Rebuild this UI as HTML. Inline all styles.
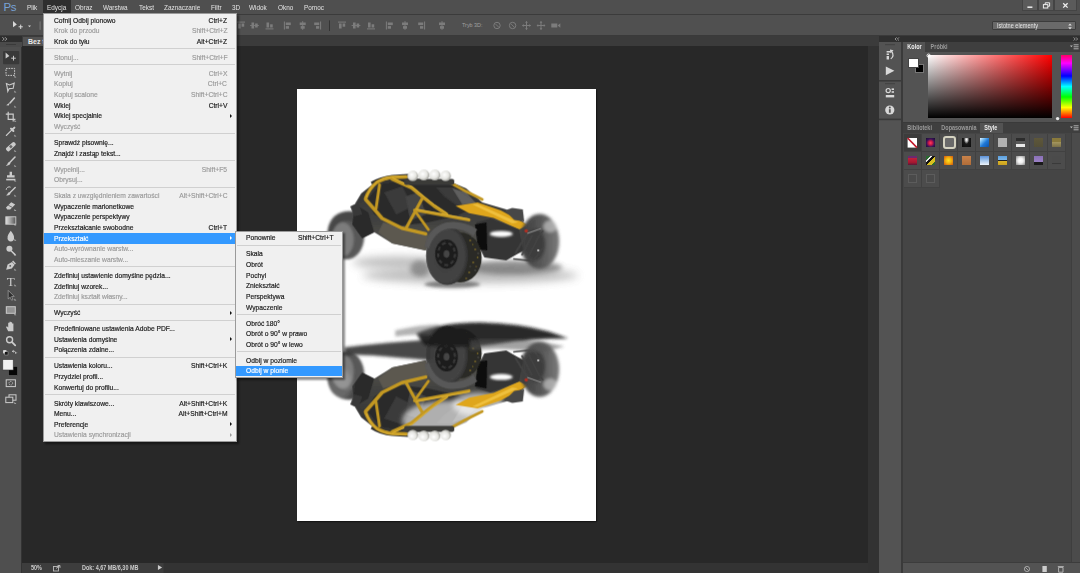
<!DOCTYPE html>
<html lang="pl"><head><meta charset="utf-8"><title>Photoshop</title>
<style>
*{box-sizing:border-box;margin:0;padding:0}
html,body{width:1080px;height:573px;overflow:hidden;background:#282828}
body{position:relative;font-family:"Liberation Sans",sans-serif;font-size:8px;color:#ddd;line-height:1}
.abs{position:absolute}
#menubar{position:absolute;left:0;top:0;width:1080px;height:13.5px;background:#4f4f4f}
#pslogo{position:absolute;left:3.5px;top:1.5px;font-size:11.5px;color:#78a3d6;letter-spacing:-0.3px}
.mbi{position:absolute;top:4.3px;font-size:8px;color:#e4e4e4;white-space:nowrap;transform:scaleX(.8);transform-origin:0 0}
#mbhl{position:absolute;left:42.5px;top:0;width:28.5px;height:13.5px;background:#2f2f2f}
#optbar{position:absolute;left:0;top:13.5px;width:1080px;height:22px;background:#505050;border-top:1px solid #3b3b3b;border-bottom:1px solid #3a3a3a}
#tabstrip{position:absolute;left:0;top:35.5px;width:880px;height:10.5px;background:#3b3b3b}
#doctab{position:absolute;left:23px;top:36.5px;width:60px;height:9.5px;background:#535353;font-size:7px;color:#e8e8e8;padding:1.5px 0 0 5px;font-weight:bold}
#tools{position:absolute;left:0;top:36px;width:21.5px;height:537px;background:#4f4f4f;border-right:1px solid #333}
#toolhdr{position:absolute;left:0;top:36px;width:21.5px;height:6px;background:#2e2e2e}
#canvasbg{position:absolute;left:22px;top:46px;width:858px;height:527px;background:#282828}
#doc{position:absolute;left:296.8px;top:88.6px;width:299.3px;height:432.4px;background:#fff;overflow:hidden;box-shadow:.8px .8px 1.2px rgba(0,0,0,.55)}
#vscroll{position:absolute;left:867.5px;top:46px;width:12px;height:527px;background:#323232}
#statusbar{position:absolute;left:22px;top:562.5px;width:846px;height:10.5px;background:linear-gradient(to right,#3d3d3d 0,#3d3d3d 141px,#333 142px)}
#statusbar span{position:absolute;top:2px;font-size:6.5px;color:#ccc;font-weight:bold;transform:scaleX(.84);transform-origin:0 0;white-space:nowrap}

/* menus */
.menu{position:absolute;background:#f0f0f0;border:1px solid #9a9a9a;box-shadow:1.5px 1.5px 2px rgba(0,0,0,.45);color:#1a1a1a;font-size:8px}
.menu.main{left:43px;top:13.2px;width:194.2px;padding-top:.6px;padding-bottom:.7px}
.menu.sub{left:235.3px;top:230.9px;width:108px;padding-top:.8px;padding-bottom:.7px}
.mi{position:relative;height:10.65px;white-space:nowrap}
.mi .lab{position:absolute;left:9.6px;top:1.8px;transform:scaleX(.838);transform-origin:0 0;-webkit-text-stroke:.2px}
.menu.sub .mi .lab{left:9.8px}
.mi .sc{position:absolute;right:9px;top:1.8px;transform:scaleX(.838);transform-origin:100% 0;-webkit-text-stroke:.2px}
.mi .arr{position:absolute;right:4px;top:3.2px;width:0;height:0;border-left:2.6px solid #111;border-top:2.4px solid transparent;border-bottom:2.4px solid transparent}
.mi.dis{color:#9b9b9b}
.mi.dis .arr{border-left-color:#9b9b9b}
.mi.hl{background:#3399ff;color:#fff}
.mi.hl .arr{border-left-color:#fff}
.sep{height:5.325px;position:relative}
.sep i{position:absolute;left:1px;right:1px;top:1.6px;height:1px;background:#d0d0d0;display:block}

/* right panels */
#rdock{position:absolute;left:879.2px;top:35.5px;width:200.8px;height:537.5px;background:#3a3a3a}
#rtop{position:absolute;left:879.2px;top:35.5px;width:200.8px;height:6px;background:#2f2f2f}
#iconstrip{position:absolute;left:879.4px;top:42px;width:21.8px;height:531px;background:#535353}
#panelA{position:absolute;left:903px;top:42px;width:177px;height:79.5px;background:#535353}
#panelB{position:absolute;left:903px;top:123px;width:177px;height:450px;background:#454545}
.ptabs{position:absolute;left:0;top:0;right:0;height:9.5px;background:#3f3f3f}
.ptab{position:absolute;top:0;height:9.5px;font-size:6.5px;font-weight:bold;color:#9a9a9a;padding:1.8px 0 0 0;text-align:center}
.ptab span{display:inline-block;transform:scaleX(.84)}
.ptab.on{background:#535353;color:#f0f0f0}
#toolsvg{position:absolute;left:0;top:36px;filter:blur(.25px);opacity:.92}
#winbtns{position:absolute;left:1022px;top:0;width:58px;height:10.5px}
.wb{position:absolute;top:0;height:10.5px;background:#5b5b5b;border:1px solid #444;border-top:none}
#workspace{position:absolute;left:991.5px;top:20.5px;width:84px;height:9.5px;background:#6a6a6a;border:1px solid #3c3c3c;border-radius:1px;color:#e6e6e6;font-size:7px;padding:.6px 0 0 4px}
#workspace span{display:inline-block;transform:scaleX(.8);transform-origin:0 0}
#colfield{position:absolute;left:25px;top:13px;width:123.5px;height:63px;background:linear-gradient(to bottom,rgba(0,0,0,0),#000),linear-gradient(to right,#fff,#f00)}
#huestrip{position:absolute;left:158px;top:13px;width:11px;height:63px;background:linear-gradient(to bottom,#f06 0%,#f0f 13%,#00f 33.3%,#0ff 50%,#0f0 66.6%,#ff0 83.3%,#f00 100%)}
.cell{position:absolute;width:18px;height:18px;background:#4c4c4c;border-right:1px solid #414141;border-bottom:1px solid #414141}
.cell i{position:absolute;left:3.7px;top:4.2px;width:9.2px;height:9.2px;display:block}
#pBscroll{position:absolute;right:0;top:9.5px;width:9px;bottom:11px;background:#4b4b4b;border-left:1px solid #3e3e3e}
#pBfoot{position:absolute;left:0;right:0;bottom:0;height:11px;background:#535353;border-top:1px solid #3c3c3c}
.isg{position:absolute;left:1.5px;width:19px;background:#535353}

</style></head>
<body>
<div id="canvasbg"></div>
<div id="doc">
<svg style="position:absolute;left:0;top:0" width="299" height="432" viewBox="296.8 88.6 299 432">
<defs>
 <filter id="b0" x="-10%" y="-10%" width="120%" height="120%"><feGaussianBlur stdDeviation="0.45"/></filter>
 <filter id="b1" x="-20%" y="-20%" width="140%" height="140%"><feGaussianBlur stdDeviation="0.8"/></filter>
 <filter id="b2" x="-20%" y="-40%" width="140%" height="180%"><feGaussianBlur stdDeviation="1.8"/></filter>
 <filter id="b3" x="-20%" y="-60%" width="140%" height="220%"><feGaussianBlur stdDeviation="2.8"/></filter>
 <filter id="b4" x="-20%" y="-80%" width="140%" height="260%"><feGaussianBlur stdDeviation="4.5"/></filter>
 <radialGradient id="lamp" cx=".4" cy=".4" r=".7"><stop offset="0" stop-color="#fff"/><stop offset=".55" stop-color="#e6e6e2"/><stop offset="1" stop-color="#8e8e88"/></radialGradient>
 <radialGradient id="tire" cx=".45" cy=".5" r=".55"><stop offset="0" stop-color="#3e3e3e"/><stop offset=".8" stop-color="#444"/><stop offset="1" stop-color="#2e2e2e"/></radialGradient>
 <linearGradient id="bodyg" x1="0" y1="0" x2="0" y2="1"><stop offset="0" stop-color="#303030"/><stop offset=".55" stop-color="#424240"/><stop offset="1" stop-color="#5e5c56"/></linearGradient>
 <linearGradient id="rw" x1="0" y1="0" x2="1" y2="0"><stop offset="0" stop-color="#3a3a3a"/><stop offset=".6" stop-color="#5c5c5c"/><stop offset="1" stop-color="#7a7a7a"/></linearGradient>
 <linearGradient id="fade" x1="0" y1="0" x2="0" y2="1"><stop offset="0" stop-color="#fff" stop-opacity="0"/><stop offset=".5" stop-color="#fff" stop-opacity=".55"/><stop offset="1" stop-color="#fff" stop-opacity=".85"/></linearGradient>
 <!-- part A: wheels far + body -->
 <g id="carA">
  <g filter="url(#b1)">
   <ellipse cx="346.5" cy="236" rx="17.5" ry="23" fill="#585858"/>
   <ellipse cx="342.5" cy="239" rx="11" ry="17" fill="#7c7c7c"/>
   <path d="M327,234 Q328,214 345,211 Q358,210 365,216 L365,228 Q352,218 342,221 Q332,224 330,242z" fill="#474747"/>
  </g>
  <path d="M355,203 L361,193 L371,185 L381,180 L404,177 L452,182 L466,188 L482,202 L506,209 L524,222 L530,236 L524,250 L508,258 L486,257 L478,246 L470,236 L432,234 L426,250 L392,243 L368,228 L357,214z" fill="url(#bodyg)"/>
  <path d="M366,200 L380,184 L404,180 L452,185 L468,196 L478,206 L455,216 L428,222 L395,226 L374,214z" fill="#2c2c2c"/>
  <path d="M384,192 L402,186 L412,206 L396,214z" fill="#3b3b3b"/>
  <path d="M405,196 L418,192 L426,214 L410,220z" fill="#444"/>
  <path d="M436,187 L454,187 L470,198 L478,206 L458,206 L444,196z" fill="#3a3a3a"/>
  <path d="M452,188 L466,192 L476,203 L462,204z" fill="#6e6e6e" opacity=".7"/>
  <path d="M383,222 L428,234 L425,250 L392,243 L378,232z" fill="#5b5850"/>
  <path d="M355,204 L368,212 L374,232 L362,238 L352,224z" fill="#2a2a2a"/>
  <path d="M350,206 L358,202 L362,214 L354,216z" fill="#383838"/>
 </g>
 <!-- part B: cage, lights, front wheels, nose -->
 <g id="carB">
  <path d="M455.4,205.4 L477.4,202 L500.6,210 L527.5,224.4 L519,229 L493.3,217.4 L468.9,212.7z" fill="#dfa61c"/>
  <path d="M472,204 L477,203.4 L518,222 L512,223z" fill="#f4c84a" opacity=".75"/>
  
  <path d="M370.5,181.6 Q380,175.6 392,174.4 L408,173.6 L408,177 L392,177.6 Q381,178.6 372,184.6z" fill="#2e2e2e"/>
  <g fill="none" stroke="#c39822" stroke-width="3.5" stroke-linecap="round" stroke-linejoin="round">
   <path d="M365.4,198 Q369,188 376.5,182 Q384,177.6 392,177 L406,176.4"/>
   <path d="M365.4,199 L382,218 L401.7,227.8 L425.4,233.4"/>
   <path d="M379.3,184.5 L375.8,208.3" stroke-width="2.9"/>
   <path d="M392,178.6 L411.5,187.3 L422.6,196.6 L433.8,205.5 L446.4,213.9"/>
   <path d="M422.6,197.1 L405.9,227.8" stroke-width="3.1"/>
   <path d="M414.2,209.7 L428.2,229.2" stroke-width="2.8"/>
   <path d="M415.6,209.7 L468.7,219.5" stroke-width="3.3"/>
   <path d="M447.8,181 L464,190 L482,199" stroke-width="2.8"/>
  </g>
  <g fill="none" stroke="#e6ba3a" stroke-width="1" stroke-linecap="round" opacity=".8">
   <path d="M366,196.4 Q369.6,187 377,181 Q384,176.8 392,176.2 L406,175.6"/>
   <path d="M392.6,177.6 L412,186.4 L423,195.6 L434.4,204.6 L447,213"/>
   <path d="M416,208.8 L469,218.6"/>
  </g>
  <rect x="404" y="178.5" width="50" height="6" rx="2" fill="#3a3a38"/>
  <circle cx="412.6" cy="175.4" r="5.3" fill="url(#lamp)"/>
  <circle cx="423.6" cy="174.6" r="5.5" fill="url(#lamp)"/>
  <circle cx="434.6" cy="174.6" r="5.5" fill="url(#lamp)"/>
  <circle cx="445.4" cy="175.4" r="5.3" fill="url(#lamp)"/>
  <!-- far right wheel -->
  <g filter="url(#b2)">
   <ellipse cx="539.5" cy="241" rx="19.5" ry="27.5" fill="url(#rw)"/>
   <ellipse cx="535" cy="244" rx="10" ry="16" fill="#3e3e3e"/>
   <ellipse cx="550" cy="226" rx="7" ry="6" fill="#ddd" opacity=".55"/>
  </g>
  <path d="M504.5,210 L512,207.4 L522.6,209 L524,221 L514,219.6z" fill="#474747"/>
  <path d="M476,222 L490,218 L519,229 L523,250 L506,260 L484,257 L478,244z" fill="#363636"/>
  <path d="M474.7,224 L486.3,222 L487,250 L478,249z" fill="#0e0e0e"/>
  <ellipse cx="501" cy="233.4" rx="11.5" ry="3" fill="#fff" filter="url(#b1)"/>
  <g fill="none" stroke="#444" stroke-width="1.7">
   <path d="M515,253 L527,233 L541,228"/><path d="M521.5,255 L532,235"/><path d="M528,257 L538,237 L543,230"/><path d="M513,258.5 L533,260.5 L543,247"/>
  </g>
  <path d="M527,233 L541,228" stroke="#999" stroke-width="1" fill="none"/>
  <circle cx="526" cy="230.5" r="1.7" fill="#b33022"/>
  <circle cx="538" cy="250" r="1" fill="#eee"/>
  <!-- front left wheel -->
  <ellipse cx="460" cy="257" rx="21.5" ry="25" fill="#2a2a25"/>
  <g fill="#a88c2c"><circle cx="470" cy="240" r=".8"/><circle cx="475" cy="249" r=".8"/><circle cx="473" cy="262" r=".8"/><circle cx="469" cy="272" r=".8"/><circle cx="477.4" cy="257" r=".7"/><circle cx="466" cy="278" r=".7"/><circle cx="472.6" cy="244" r=".6"/><circle cx="476" cy="266" r=".6"/></g>
  <g fill="#555"><circle cx="472" cy="236" r=".8"/><circle cx="478" cy="253" r=".8"/><circle cx="475" cy="270" r=".8"/><circle cx="470" cy="266" r=".7"/></g>
  <ellipse cx="447" cy="255.2" rx="21.2" ry="29.4" fill="url(#tire)"/>
  <ellipse cx="446.3" cy="253.6" rx="11.4" ry="14.6" fill="#1d1d1d"/>
  <ellipse cx="446.3" cy="253.6" rx="8.4" ry="11" fill="none" stroke="#383838" stroke-width="2.2" stroke-dasharray="4,2.8"/>
  <ellipse cx="446.3" cy="253.6" rx="3" ry="3.8" fill="#444"/>
  <path d="M424.6,246 Q428,227 446,222 Q463,219.4 477,229 L473.4,235.6 Q462,227 447,228.6 Q434,231.6 428.6,248z" fill="#585858"/>
 </g>
</defs>
<g filter="url(#b0)">
<!-- top car shadow -->
<ellipse cx="470" cy="275" rx="108" ry="8" fill="#808080" opacity=".5" filter="url(#b4)"/>
<ellipse cx="398" cy="262" rx="46" ry="6" fill="#8a8a8a" opacity=".55" filter="url(#b4)"/>
<ellipse cx="512" cy="267" rx="50" ry="7" fill="#666" opacity=".7" filter="url(#b3)"/>
<ellipse cx="452" cy="284" rx="28" ry="3.4" fill="#3a3a3a" opacity=".6" filter="url(#b2)"/>
<ellipse cx="420" cy="268" rx="10" ry="8" fill="#555" opacity=".5" filter="url(#b3)"/>
<use href="#carA"/>
<use href="#carB"/>
<!-- bottom car (flipped around y=305) -->
<g transform="translate(0,610) scale(1,-1)">
 <use href="#carA"/>
</g>
<ellipse cx="448" cy="420" rx="46" ry="20" fill="#fff" opacity=".62" filter="url(#b3)"/>
<ellipse cx="478" cy="404" rx="26" ry="12" fill="#fff" opacity=".6" filter="url(#b3)"/>
<ellipse cx="340" cy="384" rx="12" ry="16" fill="#fff" opacity=".18" filter="url(#b3)"/>
<g transform="translate(0,610) scale(1,-1)">
 <use href="#carB"/>
</g>
<!-- bottom car dark streaks -->
<g filter="url(#b2)">
 <path d="M344,347 Q385,342 432,339 L432,360 Q395,357 372,355 Q355,354 345,355z" fill="#383838" opacity=".92"/>
 <path d="M416,333 Q440,322 480,322 Q520,323 548,331 Q560,335 568,338 Q530,338 500,343 Q460,349 424,345z" fill="#1e1e1e" opacity=".95"/>
 <path d="M470,340 Q520,336 564,346 L542,352 Q500,346 470,350z" fill="#555" opacity=".55"/>
 <path d="M395,330 Q420,324 440,324 L430,334 Q410,334 395,336z" fill="#666" opacity=".5"/>
</g>
</g>
</g>
</svg>

</div>
<div id="vscroll"></div>
<div id="statusbar"><span style="left:9px">50%</span><svg style="position:absolute;left:31px;top:2px" width="8" height="7"><rect x=".5" y="1.5" width="5" height="4.5" fill="none" stroke="#bbb" stroke-width=".9"/><path d="M3,3.5 L7,0.5 M7,0.5h-2.4M7,0.5v2.4" stroke="#bbb" stroke-width=".9" fill="none"/></svg><span style="left:59.5px">Dok: 4,67 MB/6,30 MB</span><span style="left:135.5px;font-size:5.5px;top:2.6px">&#9654;</span></div>

<div id="menubar">
<div id="mbhl"></div>
<span id="pslogo">Ps</span>
<span class="mbi" style="left:27px">Plik</span><span class="mbi" style="left:47px">Edycja</span><span class="mbi" style="left:75px">Obraz</span><span class="mbi" style="left:103px">Warstwa</span><span class="mbi" style="left:139px">Tekst</span><span class="mbi" style="left:164px">Zaznaczanie</span><span class="mbi" style="left:210.7px">Filtr</span><span class="mbi" style="left:231.7px">3D</span><span class="mbi" style="left:249px">Widok</span><span class="mbi" style="left:278px">Okno</span><span class="mbi" style="left:304px">Pomoc</span>
<div id="winbtns">
 <div class="wb" style="left:0;width:16px"></div><div class="wb" style="left:16px;width:16px"></div><div class="wb" style="left:32px;width:23px"></div>
 <svg style="position:absolute;left:0;top:0" width="58" height="11"><path d="M5.4,7.2h5" stroke="#eee" stroke-width="1.5"/><rect x="21.4" y="4.6" width="4.4" height="3.4" fill="none" stroke="#eee" stroke-width="1"/><path d="M23.2,4.4v-1.6h4.4v3.4h-1.6" fill="none" stroke="#eee" stroke-width="1"/><path d="M41.2,3.2l4.4,4.4M45.6,3.2l-4.4,4.4" stroke="#eee" stroke-width="1.3"/></svg>
</div>
</div>
<div id="optbar">
<svg style="position:absolute;left:0;top:0" width="1080" height="20" viewBox="0 0 1080 20"><g transform="translate(17.6,10.4)"><path d="M-4.6,-4.4 L-0.8,-0.9 L-4.6,1.8z" fill="#d8d8d8"/><path d="M1,1.4h4.2M3.1,-0.8v4.4" stroke="#d8d8d8" stroke-width="1" fill="none"/></g><path d="M28,10.4 h3 l-1.5,1.8z" fill="#d0d0d0"/><rect x="39.6" y="6.4" width="1" height="8.4" fill="#7a7a7a"/><g transform="translate(241,10.5)" opacity=".5"><path d="M-4,-3.4h8" stroke="#a8a8a8" stroke-width="1"/><rect x="-3" y="-2" width="2.6" height="5" fill="#a8a8a8"/><rect x="0.6" y="-2" width="2.6" height="3.2" fill="#a8a8a8"/></g><g transform="translate(254.5,10.5)" opacity=".5"><path d="M-4.4,0h8.8" stroke="#a8a8a8" stroke-width=".9"/><rect x="-3" y="-3" width="2.6" height="6" fill="#a8a8a8"/><rect x="0.6" y="-2" width="2.6" height="4" fill="#a8a8a8"/></g><g transform="translate(269.5,10.5)" opacity=".5"><path d="M-4,3.4h8" stroke="#a8a8a8" stroke-width="1"/><rect x="-3" y="-3" width="2.6" height="5" fill="#a8a8a8"/><rect x="0.6" y="-1.2" width="2.6" height="3.2" fill="#a8a8a8"/></g><g transform="translate(288,10.5)" opacity=".5"><path d="M-3.6,-4v8" stroke="#a8a8a8" stroke-width="1"/><rect x="-2.2" y="-3" width="5" height="2.6" fill="#a8a8a8"/><rect x="-2.2" y="0.6" width="3.2" height="2.6" fill="#a8a8a8"/></g><g transform="translate(302.7,10.5)" opacity=".5"><path d="M0,-4.4v8.8" stroke="#a8a8a8" stroke-width=".9"/><rect x="-3" y="-3" width="6" height="2.6" fill="#a8a8a8"/><rect x="-2" y="0.6" width="4" height="2.6" fill="#a8a8a8"/></g><g transform="translate(317,10.5)" opacity=".5"><path d="M3.6,-4v8" stroke="#a8a8a8" stroke-width="1"/><rect x="-2.8" y="-3" width="5" height="2.6" fill="#a8a8a8"/><rect x="-1" y="0.6" width="3.2" height="2.6" fill="#a8a8a8"/></g><g transform="translate(342,10.5)" opacity=".5"><path d="M-4,-3.4h8" stroke="#a8a8a8" stroke-width="1"/><rect x="-3" y="-2" width="2.6" height="5" fill="#a8a8a8"/><rect x="0.6" y="-2" width="2.6" height="3.2" fill="#a8a8a8"/></g><g transform="translate(356,10.5)" opacity=".5"><path d="M-4.4,0h8.8" stroke="#a8a8a8" stroke-width=".9"/><rect x="-3" y="-3" width="2.6" height="6" fill="#a8a8a8"/><rect x="0.6" y="-2" width="2.6" height="4" fill="#a8a8a8"/></g><g transform="translate(371,10.5)" opacity=".5"><path d="M-4,3.4h8" stroke="#a8a8a8" stroke-width="1"/><rect x="-3" y="-3" width="2.6" height="5" fill="#a8a8a8"/><rect x="0.6" y="-1.2" width="2.6" height="3.2" fill="#a8a8a8"/></g><g transform="translate(390,10.5)" opacity=".5"><path d="M-3.6,-4v8" stroke="#a8a8a8" stroke-width="1"/><rect x="-2.2" y="-3" width="5" height="2.6" fill="#a8a8a8"/><rect x="-2.2" y="0.6" width="3.2" height="2.6" fill="#a8a8a8"/></g><g transform="translate(405,10.5)" opacity=".5"><path d="M0,-4.4v8.8" stroke="#a8a8a8" stroke-width=".9"/><rect x="-3" y="-3" width="6" height="2.6" fill="#a8a8a8"/><rect x="-2" y="0.6" width="4" height="2.6" fill="#a8a8a8"/></g><g transform="translate(421,10.5)" opacity=".5"><path d="M3.6,-4v8" stroke="#a8a8a8" stroke-width="1"/><rect x="-2.8" y="-3" width="5" height="2.6" fill="#a8a8a8"/><rect x="-1" y="0.6" width="3.2" height="2.6" fill="#a8a8a8"/></g><g transform="translate(442,10.5)" opacity=".5"><path d="M0,-4.4v8.8" stroke="#a8a8a8" stroke-width=".9"/><rect x="-3" y="-3" width="6" height="2.6" fill="#a8a8a8"/><rect x="-2" y="0.6" width="4" height="2.6" fill="#a8a8a8"/></g><rect x="329" y="5.4" width="1" height="10.6" fill="#343434"/><text x="462" y="12.4" font-size="5.4" fill="#a0a0a0" font-family="Liberation Sans,sans-serif">Tryb 3D:</text><g transform="translate(497,10.5)" opacity=".5"><circle r="3.2" fill="none" stroke="#a8a8a8" stroke-width="1"/><path d="M-1.4,-1.4 L2,2" stroke="#a8a8a8" stroke-width=".9"/></g><g transform="translate(512.6,10.5)" opacity=".5"><circle r="3.2" fill="none" stroke="#a8a8a8" stroke-width="1"/><path d="M-1.4,-1.4 L2,2" stroke="#a8a8a8" stroke-width=".9"/></g><g transform="translate(526.5,10.5)" opacity=".5"><path d="M-4,0h8M0,-4v8" stroke="#a8a8a8" stroke-width="1"/><path d="M-4.4,0l1.6,-1.4v2.8z M4.4,0l-1.6,-1.4v2.8z M0,-4.4l-1.4,1.6h2.8z M0,4.4l-1.4,-1.6h2.8z" fill="#a8a8a8"/></g><g transform="translate(541,10.5)" opacity=".5"><path d="M-4,0h8M0,-4v8" stroke="#a8a8a8" stroke-width="1"/><path d="M-4.4,0l1.6,-1.4v2.8z M4.4,0l-1.6,-1.4v2.8z M0,-4.4l-1.4,1.6h2.8z M0,4.4l-1.4,-1.6h2.8z" fill="#a8a8a8"/></g><g transform="translate(555.7,10.5)" opacity=".5"><rect x="-4.4" y="-2" width="6" height="4" fill="#a8a8a8"/><path d="M2,0 L4.6,-2.2 V2.2z" fill="#a8a8a8"/></g></svg>
<div id="workspace" style="top:6px"><span>Istotne elementy</span><svg style="position:absolute;right:2.5px;top:1.5px" width="4" height="7"><path d="M0.2,2.6 L2,0.4 L3.8,2.6z M0.2,4.2 L2,6.4 L3.8,4.2z" fill="#ddd"/></svg></div>
</div>
<div id="tabstrip"></div>
<div id="doctab">Bez tytułu-1</div>
<div id="tools"></div>
<div id="toolhdr"><svg width="22" height="6" style="position:absolute;left:0;top:0"><path d="M2.4,1.2 l1.8,1.8 l-1.8,1.8 M5,1.2 l1.8,1.8 l-1.8,1.8" stroke="#bbb" stroke-width=".8" fill="none"/></svg></div>
<div id="toolgrip" style="position:absolute;left:0;top:42px;width:21.5px;height:4.5px;background:#4a4a4a"><div style="position:absolute;left:6px;top:1.8px;width:10px;height:1.4px;background:#3a3a3a"></div></div>
<svg id="toolsvg" width="22" height="537" viewBox="0 0 22 537"><rect x="3" y="15" width="16.3" height="13.2" rx="1" fill="#383838"/>
<g transform="translate(10.8,21.0)"><path d="M-5.2,-4.6 L-1.4,-1 L-5.2,1.6z" fill="#d6d6d6"/><path d="M0.4,1.2h4.6M2.7,-1.2v4.8" stroke="#d6d6d6" stroke-width="1" fill="none"/></g>
<g transform="translate(10.8,36.4)"><rect x="-4.8" y="-4" width="8.6" height="7" fill="none" stroke="#d6d6d6" stroke-width="1" stroke-dasharray="1.6,1"/><path d="M3.6,3.2 l2,2 h-2z" fill="#d6d6d6" opacity=".8"/></g>
<g transform="translate(10.8,51.4)"><path d="M-4.4,-3.8 L-1.4,-2.4 L3.4,-4.2 L2.4,0.8 L-1.6,1.2 L-3,4 L-3.6,0z" fill="none" stroke="#d6d6d6" stroke-width="1.1"/><path d="M3.6,3.2 l2,2 h-2z" fill="#d6d6d6" opacity=".8"/></g>
<g transform="translate(10.8,66.4)"><path d="M3.6,-4.4 L-0.6,0.4" stroke="#d6d6d6" stroke-width="1.6" stroke-linecap="round"/><path d="M-1,0.2 L-4.6,2.8 L-2,3 z" fill="#d6d6d6"/><path d="M3.6,3.2 l2,2 h-2z" fill="#d6d6d6" opacity=".8"/></g>
<g transform="translate(10.8,80.6)"><path d="M-2.6,-4.8v7.6h7.2M-5,-2.4h7.4v7.2" fill="none" stroke="#d6d6d6" stroke-width="1.2"/><path d="M3.6,3.2 l2,2 h-2z" fill="#d6d6d6" opacity=".8"/></g>
<g transform="translate(10.8,95.2)"><path d="M-4.4,4.2 L0.6,-0.8" stroke="#d6d6d6" stroke-width="1.3" stroke-linecap="round"/><path d="M0.2,-2.6 L2.6,-0.2 M1.2,-1.2 L3.6,-3.6" stroke="#d6d6d6" stroke-width="2" stroke-linecap="round"/><path d="M3.6,3.2 l2,2 h-2z" fill="#d6d6d6" opacity=".8"/></g>
<g transform="translate(10.8,110.6)"><rect x="-5.6" y="-2" width="11.2" height="4.2" rx="1.6" transform="rotate(-42)" fill="#d6d6d6"/><rect x="-1.3" y="-1.2" width="2.6" height="2.6" transform="rotate(-42)" fill="#6a6a6a"/><path d="M3.6,3.2 l2,2 h-2z" fill="#d6d6d6" opacity=".8"/></g>
<g transform="translate(10.8,125.6)"><path d="M4.2,-4.6 L-0.8,0.6" stroke="#d6d6d6" stroke-width="1.5" stroke-linecap="round"/><path d="M-1,0.4 q1.4,1.2 0,2.6 q-2,1.6 -4,1 q2,-1 2,-2.6 q1,-1.4 2,-1z" fill="#d6d6d6"/><path d="M3.6,3.2 l2,2 h-2z" fill="#d6d6d6" opacity=".8"/></g>
<g transform="translate(10.8,140.4)"><path d="M-1.2,-4.6h2.4v3.4h2.6v2.4h-7.6v-2.4h2.6z" fill="#d6d6d6"/><rect x="-4.6" y="2.4" width="9.2" height="1.6" fill="#d6d6d6"/><path d="M3.6,3.2 l2,2 h-2z" fill="#d6d6d6" opacity=".8"/></g>
<g transform="translate(10.8,155.2)"><path d="M4.4,-3.6 L-0.4,1" stroke="#d6d6d6" stroke-width="1.4" stroke-linecap="round"/><path d="M-0.8,0.8 q1.2,1.2 0,2.4 q-2,1.4 -3.8,0.8 q1.8,-1 1.8,-2.4z" fill="#d6d6d6"/><path d="M-4.6,-1.4 a3,3 0 0 1 4.4,-2.6" fill="none" stroke="#d6d6d6" stroke-width="1"/><path d="M3.6,3.2 l2,2 h-2z" fill="#d6d6d6" opacity=".8"/></g>
<g transform="translate(10.8,169.8)"><path d="M-4.8,1.6 L0.4,-3.6 L4.4,-1.4 L-0.6,3.8 L-3.6,3.8z" fill="#d6d6d6"/><path d="M-2.6,-0.6 L1.6,1.6" stroke="#555" stroke-width=".8"/><path d="M3.6,3.2 l2,2 h-2z" fill="#d6d6d6" opacity=".8"/></g>
<defs><linearGradient id="tg" x1="0" x2="1" y1="0" y2="0"><stop offset="0" stop-color="#eee"/><stop offset="1" stop-color="#555"/></linearGradient></defs>
<g transform="translate(10.8,184.4)"><rect x="-5" y="-3.6" width="10" height="7.4" fill="url(#tg)" stroke="#d6d6d6" stroke-width=".9"/><path d="M3.6,3.2 l2,2 h-2z" fill="#d6d6d6" opacity=".8"/></g>
<g transform="translate(10.8,199.6)"><path d="M0,-4.8 Q3.6,0 3.2,1.8 A3.3,3.3 0 1 1 -3.2,1.8 Q-3.6,0 0,-4.8z" fill="#d6d6d6"/><path d="M3.6,3.2 l2,2 h-2z" fill="#d6d6d6" opacity=".8"/></g>
<g transform="translate(10.8,214.4)"><circle cx="-1.4" cy="-1.6" r="3" fill="#d6d6d6"/><path d="M0.8,0.8 L4.2,4.2" stroke="#d6d6d6" stroke-width="1.5" stroke-linecap="round"/><path d="M3.6,3.2 l2,2 h-2z" fill="#d6d6d6" opacity=".8"/></g>
<g transform="translate(10.8,229.4)"><path d="M-4.6,4.4 L-3.2,-0.8 L1.2,-3.4 L3.8,-0.6 L1,3.2z" fill="#d6d6d6"/><circle cx="-0.6" cy="0.4" r=".9" fill="#555"/><path d="M1.8,-4.4 L4.6,-1.4" stroke="#d6d6d6" stroke-width="1.4"/><path d="M3.6,3.2 l2,2 h-2z" fill="#d6d6d6" opacity=".8"/></g>
<text x="10.8" y="249.6" font-family="Liberation Serif,serif" font-size="13" fill="#d6d6d6" text-anchor="middle">T</text><g transform="translate(10.8,245.0)"><path d="M3.6,3.2 l2,2 h-2z" fill="#d6d6d6" opacity=".8"/></g>
<g transform="translate(10.8,259.4)"><path d="M-2.6,-5 L-2.6,3.6 L-0.6,1.8 L0.8,4.8 L2.2,4.2 L0.8,1.2 L3.4,1z" fill="#2c2c2c" stroke="#d6d6d6" stroke-width=".5"/><path d="M3.6,3.2 l2,2 h-2z" fill="#d6d6d6" opacity=".8"/></g>
<g transform="translate(10.8,274.0)"><rect x="-5" y="-3.8" width="10" height="7.6" fill="#d6d6d6"/><rect x="-4" y="-2.8" width="8" height="5.6" fill="#9a9a9a"/><path d="M3.6,3.2 l2,2 h-2z" fill="#d6d6d6" opacity=".8"/></g>
<g transform="translate(10.8,290.4)"><path d="M-2.6,4.8 L-4.8,0.6 L-3.8,-0.2 L-2.6,1.2 V-3.6 h1.3 V-0.6 V-4.6 h1.3 V-0.6 V-4.2 h1.3 V-0.4 V-3 h1.3 V2.4 L2.6,4.8z" fill="#d6d6d6"/></g>
<g transform="translate(10.8,305.0)"><circle cx="-1.2" cy="-1.2" r="3" fill="none" stroke="#d6d6d6" stroke-width="1.4"/><path d="M1.2,1.2 L4.4,4.4" stroke="#d6d6d6" stroke-width="1.8" stroke-linecap="round"/></g>
<g transform="translate(10.8,316.6)"><rect x="-7.6" y="-2.4" width="3.2" height="3.2" fill="#fff"/><rect x="-6" y="-0.8" width="3.2" height="3.2" fill="#111" stroke="#ccc" stroke-width=".4"/><path d="M1.6,-1.2 q2.8,-1.2 3.6,1.8 M1.4,-1.2 l1.6,-1.2 M1.4,-1.2 l1.8,0.8 M5.2,0.8 l-1,-0.6 M5.2,0.8 l0.8,-1" stroke="#d6d6d6" stroke-width=".8" fill="none"/></g>
<rect x="8.6" y="330.4" width="9" height="9" fill="#000" stroke="#6a6a6a" stroke-width=".5"/><rect x="2.8" y="323.6" width="10.4" height="10.4" fill="#fff" stroke="#3a3a3a" stroke-width=".6"/>
<g transform="translate(10.8,347.2)"><rect x="-4.6" y="-3.4" width="9.2" height="6.8" fill="none" stroke="#d6d6d6" stroke-width="1"/><circle cx="0" cy="0" r="1.8" fill="none" stroke="#d6d6d6" stroke-width=".9" stroke-dasharray="1,.7"/></g>
<g transform="translate(10.8,362.8)"><rect x="-1.8" y="-4" width="7" height="5.4" fill="#4f4f4f" stroke="#d6d6d6" stroke-width="1"/><rect x="-5" y="-1.6" width="7" height="5.4" fill="#4f4f4f" stroke="#d6d6d6" stroke-width="1"/><path d="M3.6,3.2 l2,2 h-2z" fill="#d6d6d6" opacity=".8"/></g></svg>

<div id="rdock"></div>
<div id="rtop"><svg width="200" height="6" style="position:absolute;left:0;top:0"><path d="M17.6,1.4 l-1.6,1.6 l1.6,1.6 M20,1.4 l-1.6,1.6 l1.6,1.6 M194.6,1.4 l1.6,1.6 l-1.6,1.6 M197,1.4 l1.6,1.6 l-1.6,1.6" stroke="#aaa" stroke-width=".8" fill="none"/></svg></div>
<div id="iconstrip">
 <svg width="22" height="531" style="position:absolute;left:0;top:0">
  <rect x="0" y="38" width="22" height="1.6" fill="#3a3a3a"/><rect x="0" y="76.6" width="22" height="1.6" fill="#3a3a3a"/>
  <rect x="6" y="2" width="10" height="1.2" fill="#444"/><rect x="6" y="41" width="10" height="1.2" fill="#444"/>
  <g fill="#d8d8d8" stroke="none">
   <path d="M7.6,9 h3.6 v1.6 h-3.6z M7.6,11.6 h2.4 v1.4 h-2.4z M7.6,14 h2.4 v3.4 h-2.4z"/>
   <path d="M11.4,16.6 q3.4,-2.6 1,-6.4 l-1.2,1 l-0.2,-3.6 l3.6,0.6 l-1.2,1 q3,4.6 -1.2,8z"/>
   <path d="M6.8,24.4 L15.4,28.8 L6.8,33.2z"/>
   <circle cx="9.2" cy="48.6" r="2.1" fill="none" stroke="#d8d8d8" stroke-width="1.2"/><rect x="12.6" y="46.4" width="2.4" height="1.6"/><rect x="12.6" y="49.2" width="2.4" height="1.6"/><rect x="6.8" y="53" width="8.4" height="2.4"/>
   <circle cx="10.8" cy="68" r="4.6"/>
  </g>
  <rect x="9.9" y="67.2" width="1.8" height="3.6" fill="#535353"/><circle cx="10.8" cy="65.4" r="1" fill="#535353"/>
 </svg>
</div>
<div id="panelA">
 <div class="ptabs"><div class="ptab on" style="left:0;width:22px"><span>Kolor</span></div><div class="ptab" style="left:24px;width:24px"><span>Próbki</span></div>
 <svg style="position:absolute;right:1.5px;top:2px" width="9" height="6"><path d="M0,1.4 h2.8 l-1.4,1.8z" fill="#bbb"/><path d="M3.6,.8h5M3.6,2.8h5M3.6,4.8h5" stroke="#bbb" stroke-width=".9"/></svg></div>
 <div style="position:absolute;left:11.5px;top:21.7px;width:9px;height:9.6px;background:#000;border:.5px solid #777"></div>
 <div style="position:absolute;left:5.4px;top:15.5px;width:10.6px;height:10.9px;background:#fff;border:.5px solid #444"></div>
 <div id="colfield"></div>
 <div id="huestrip"></div>
 <svg style="position:absolute;left:23px;top:11px" width="6" height="6"><circle cx="2.6" cy="2.6" r="1.6" fill="none" stroke="#fff" stroke-width=".9"/></svg>
 <svg style="position:absolute;left:151.5px;top:73.5px" width="6" height="6"><circle cx="2.6" cy="2.6" r="1.7" fill="#e8e8e8"/></svg>
</div>
<div id="panelB">
 <div class="ptabs"><div class="ptab" style="left:2px;width:30px"><span>Biblioteki</span></div><div class="ptab" style="left:34.5px;width:42px"><span>Dopasowania</span></div><div class="ptab on" style="left:77px;width:22.5px"><span>Style</span></div>
 <svg style="position:absolute;right:1.5px;top:2px" width="9" height="6"><path d="M0,1.4 h2.8 l-1.4,1.8z" fill="#bbb"/><path d="M3.6,.8h5M3.6,2.8h5M3.6,4.8h5" stroke="#bbb" stroke-width=".9"/></svg></div>
<div class="cell" style="left:1px;top:10.5px;background:#3c3c3c;"><svg width="18" height="18" style="position:absolute;left:0;top:0"><rect x="3.6" y="4" width="9.4" height="9.6" fill="#fff"/><path d="M3.6,4 L13,13.6" stroke="#c0182a" stroke-width="1.6"/></svg></div>
<div class="cell" style="left:19px;top:10.5px;"><i style="background:radial-gradient(circle at 50% 55%,#ff4060 0,#d01848 28%,#3a1458 60%,#1a0c30 100%)"></i></div>
<div class="cell" style="left:37px;top:10.5px;"><i style="left:2.5px;top:2.5px;width:13px;height:13px;border:2px solid #d4d2c0;border-radius:3px;background:#6a6a6a"></i></div>
<div class="cell" style="left:55px;top:10.5px;"><i style="background:radial-gradient(ellipse at 50% 18%,#fff 0,#bbb 18%,#1a1a1a 42%,#0c0c0c 100%)"></i></div>
<div class="cell" style="left:73px;top:10.5px;"><i style="background:linear-gradient(135deg,#e8f4ff 0,#7cc0f4 25%,#1e78d8 55%,#0c50a8 100%)"></i></div>
<div class="cell" style="left:91px;top:10.5px;"><i style="background:#b2b2b2"></i></div>
<div class="cell" style="left:109px;top:10.5px;"><i style="background:linear-gradient(to bottom,#2c2c2c 0,#2c2c2c 30%,#5a5a5a 30%,#5a5a5a 62%,#e8e8e8 62%,#e8e8e8 100%)"></i></div>
<div class="cell" style="left:127px;top:10.5px;"><i style="background:linear-gradient(to bottom,#5e573a,#544f38)"></i></div>
<div class="cell" style="left:145px;top:10.5px;"><i style="background:linear-gradient(to bottom,#8a7a3c 0,#8a7a3c 40%,#a89a60 40%,#7a7048 100%)"></i></div>
<div class="cell" style="left:1px;top:28.5px;"><i style="background:linear-gradient(to bottom,#6a2a70 0,#6a2a70 22%,#c0203c 22%,#a81830 70%,#5a1838 100%)"></i></div>
<div class="cell" style="left:19px;top:28.5px;"><i style="background:linear-gradient(135deg,#2a6a30 0,#2a6a30 25%,#e8e8e8 25%,#e8e8e8 38%,#111 38%,#111 55%,#d8c020 55%,#d8c020 80%,#2a6a30 80%)"></i></div>
<div class="cell" style="left:37px;top:28.5px;"><i style="background:radial-gradient(circle at 50% 50%,#ffe020 0,#f0b010 45%,#d05010 100%)"></i></div>
<div class="cell" style="left:55px;top:28.5px;"><i style="background:linear-gradient(to bottom,#c8824a,#b06c38)"></i></div>
<div class="cell" style="left:73px;top:28.5px;"><i style="background:linear-gradient(to bottom,#5a90d8 0,#a8c8ec 50%,#eef4fa 100%)"></i></div>
<div class="cell" style="left:91px;top:28.5px;"><i style="background:linear-gradient(to bottom,#5aa0e0 0,#7ab4e8 40%,#222 40%,#222 50%,#e0b828 50%,#c8a020 100%)"></i></div>
<div class="cell" style="left:109px;top:28.5px;"><i style="background:radial-gradient(circle at 50% 50%,#fff 0,#f0f0f0 40%,#888 100%)"></i></div>
<div class="cell" style="left:127px;top:28.5px;"><i style="background:linear-gradient(to bottom,#8a70b8 0,#9a80c4 62%,#1a1a1a 62%,#1a1a1a 100%)"></i></div>
<div class="cell" style="left:145px;top:28.5px;"><i style="background:linear-gradient(to bottom,#4b4b4b 0,#4b4b4b 80%,#3a3a3a 80%,#3a3a3a 90%,#4b4b4b 90%)"></i></div>
<div class="cell" style="left:1px;top:46.5px;"><i style="border:1px solid #5c5c5c;background:#4a4a4a"></i></div>
<div class="cell" style="left:19px;top:46.5px;"><i style="border:1px solid #5c5c5c;background:#4a4a4a"></i></div>
 <div id="pBscroll"></div>
 <div id="pBfoot"><svg style="position:absolute;left:118px;top:1.5px" width="50" height="8"><circle cx="6" cy="4" r="2.6" fill="none" stroke="#aaa" stroke-width=".9"/><path d="M4.2,2.2 L7.8,5.8" stroke="#aaa" stroke-width=".9"/><path d="M21.4,1 h4.4 v6 h-4.4z" fill="#ccc"/><path d="M37.6,2.4 h4.4 v4.8 h-4.4z M36.8,1.6 h6" fill="none" stroke="#bbb" stroke-width=".9"/></svg></div>
</div>

<div class="menu main">
<div class="mi"><span class="lab">Cofnij Odbij pionowo</span><span class="sc">Ctrl+Z</span></div>
<div class="mi dis"><span class="lab">Krok do przodu</span><span class="sc">Shift+Ctrl+Z</span></div>
<div class="mi"><span class="lab">Krok do tyłu</span><span class="sc">Alt+Ctrl+Z</span></div>
<div class="sep"><i></i></div>
<div class="mi dis"><span class="lab">Stonuj...</span><span class="sc">Shift+Ctrl+F</span></div>
<div class="sep"><i></i></div>
<div class="mi dis"><span class="lab">Wytnij</span><span class="sc">Ctrl+X</span></div>
<div class="mi dis"><span class="lab">Kopiuj</span><span class="sc">Ctrl+C</span></div>
<div class="mi dis"><span class="lab">Kopiuj scalone</span><span class="sc">Shift+Ctrl+C</span></div>
<div class="mi"><span class="lab">Wklej</span><span class="sc">Ctrl+V</span></div>
<div class="mi"><span class="lab">Wklej specjalnie</span><span class="arr"></span></div>
<div class="mi dis"><span class="lab">Wyczyść</span></div>
<div class="sep"><i></i></div>
<div class="mi"><span class="lab">Sprawdź pisownię...</span></div>
<div class="mi"><span class="lab">Znajdź i zastąp tekst...</span></div>
<div class="sep"><i></i></div>
<div class="mi dis"><span class="lab">Wypełnij...</span><span class="sc">Shift+F5</span></div>
<div class="mi dis"><span class="lab">Obrysuj...</span></div>
<div class="sep"><i></i></div>
<div class="mi dis"><span class="lab">Skala z uwzględnieniem zawartości</span><span class="sc">Alt+Shift+Ctrl+C</span></div>
<div class="mi"><span class="lab">Wypaczenie marionetkowe</span></div>
<div class="mi"><span class="lab">Wypaczenie perspektywy</span></div>
<div class="mi"><span class="lab">Przekształcanie swobodne</span><span class="sc">Ctrl+T</span></div>
<div class="mi hl"><span class="lab">Przekształć</span><span class="arr"></span></div>
<div class="mi dis"><span class="lab">Auto-wyrównanie warstw...</span></div>
<div class="mi dis"><span class="lab">Auto-mieszanie warstw...</span></div>
<div class="sep"><i></i></div>
<div class="mi"><span class="lab">Zdefiniuj ustawienie domyślne pędzla...</span></div>
<div class="mi"><span class="lab">Zdefiniuj wzorek...</span></div>
<div class="mi dis"><span class="lab">Zdefiniuj kształt własny...</span></div>
<div class="sep"><i></i></div>
<div class="mi"><span class="lab">Wyczyść</span><span class="arr"></span></div>
<div class="sep"><i></i></div>
<div class="mi"><span class="lab">Predefiniowane ustawienia Adobe PDF...</span></div>
<div class="mi"><span class="lab">Ustawienia domyślne</span><span class="arr"></span></div>
<div class="mi"><span class="lab">Połączenia zdalne...</span></div>
<div class="sep"><i></i></div>
<div class="mi"><span class="lab">Ustawienia koloru...</span><span class="sc">Shift+Ctrl+K</span></div>
<div class="mi"><span class="lab">Przydziel profil...</span></div>
<div class="mi"><span class="lab">Konwertuj do profilu...</span></div>
<div class="sep"><i></i></div>
<div class="mi"><span class="lab">Skróty klawiszowe...</span><span class="sc">Alt+Shift+Ctrl+K</span></div>
<div class="mi"><span class="lab">Menu...</span><span class="sc">Alt+Shift+Ctrl+M</span></div>
<div class="mi"><span class="lab">Preferencje</span><span class="arr"></span></div>
<div class="mi dis"><span class="lab">Ustawienia synchronizacji</span><span class="arr"></span></div>
</div>
<div class="menu sub">
<div class="mi"><span class="lab">Ponownie</span><span class="sc">Shift+Ctrl+T</span></div>
<div class="sep"><i></i></div>
<div class="mi"><span class="lab">Skala</span></div>
<div class="mi"><span class="lab">Obrót</span></div>
<div class="mi"><span class="lab">Pochyl</span></div>
<div class="mi"><span class="lab">Zniekształć</span></div>
<div class="mi"><span class="lab">Perspektywa</span></div>
<div class="mi"><span class="lab">Wypaczenie</span></div>
<div class="sep"><i></i></div>
<div class="mi"><span class="lab">Obróć 180°</span></div>
<div class="mi"><span class="lab">Obrót o 90° w prawo</span></div>
<div class="mi"><span class="lab">Obrót o 90° w lewo</span></div>
<div class="sep"><i></i></div>
<div class="mi"><span class="lab">Odbij w poziomie</span></div>
<div class="mi hl"><span class="lab">Odbij w pionie</span></div>
</div>

</body></html>
